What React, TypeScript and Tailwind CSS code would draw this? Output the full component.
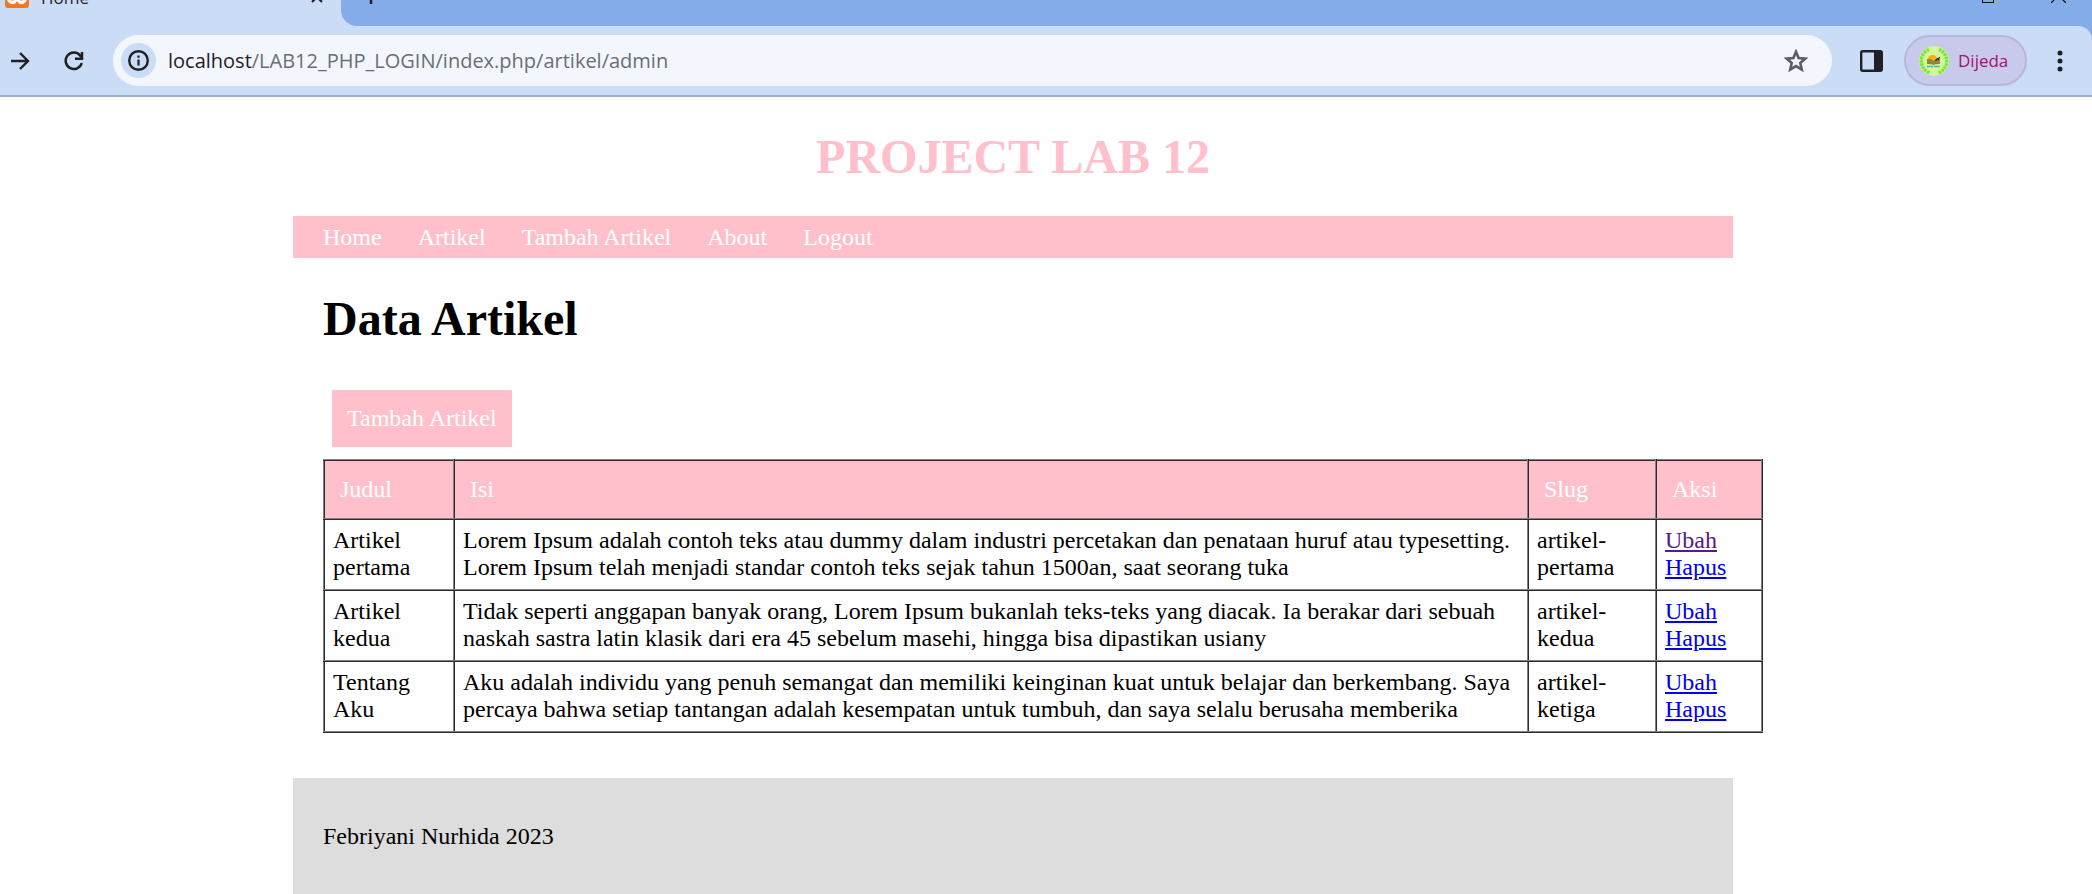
import React from "react";

const navItems = ["Home", "Artikel", "Tambah Artikel", "About", "Logout"];

const rows = [
  {
    judul: "Artikel pertama",
    isi: "Lorem Ipsum adalah contoh teks atau dummy dalam industri percetakan dan penataan huruf atau typesetting. Lorem Ipsum telah menjadi standar contoh teks sejak tahun 1500an, saat seorang tuka",
    slug: "artikel-pertama",
    visited: true,
  },
  {
    judul: "Artikel kedua",
    isi: "Tidak seperti anggapan banyak orang, Lorem Ipsum bukanlah teks-teks yang diacak. Ia berakar dari sebuah naskah sastra latin klasik dari era 45 sebelum masehi, hingga bisa dipastikan usiany",
    slug: "artikel-kedua",
    visited: false,
  },
  {
    judul: "Tentang Aku",
    isi: "Aku adalah individu yang penuh semangat dan memiliki keinginan kuat untuk belajar dan berkembang. Saya percaya bahwa setiap tantangan adalah kesempatan untuk tumbuh, dan saya selalu berusaha memberika",
    slug: "artikel-ketiga",
    visited: false,
  },
];

function TabStrip() {
  return (
    <div className="flex h-[26px] overflow-hidden bg-[#84ace9]">
      <div className="relative flex h-[26px] w-[341px] shrink-0 bg-[#cbdcf6]">
        <svg className="absolute bottom-[18px] left-[5px]" width="24" height="24" viewBox="0 0 24 24">
          <rect width="24" height="24" rx="3" fill="#f37623" />
          <path
            d="M8 9.500a4.500 4.500 0 1 0 0 9c3 0 5-9 8-9a4.500 4.500 0 1 1 0 9c-3 0-5-9-8-9z"
            fill="none"
            stroke="#fff"
            strokeWidth="3.500"
          />
        </svg>
        <span className="absolute bottom-[16px] left-[41px] font-['Open_Sans',sans-serif] text-[17px] leading-6 text-[#1f2023]">
          Home
        </span>
        <button aria-label="Close tab" className="absolute bottom-[23px] left-[311px]">
          <svg width="12" height="12" viewBox="0 0 12 12" className="block">
            <path d="M1 1l10 10M11 1L1 11" stroke="#1f2023" strokeWidth="2.200" />
          </svg>
        </button>
      </div>
      <div className="relative flex-1 bg-[#cbdcf6]">
        <div className="h-[26px] rounded-bl-[16px] bg-[#84ace9]" />
        <button aria-label="New tab" className="absolute bottom-[22px] left-[22px]">
          <svg width="16" height="16" viewBox="0 0 16 16" className="block">
            <path d="M8 0v16M0 8h16" stroke="#1f2023" strokeWidth="2.500" />
          </svg>
        </button>
        <button aria-label="Maximize" className="absolute right-[98px] bottom-[23px]">
          <svg width="12" height="12" viewBox="0 0 12 12" className="block">
            <rect x="0.500" y="0.500" width="11" height="11" fill="none" stroke="#111" />
          </svg>
        </button>
        <button aria-label="Close window" className="absolute right-[26px] bottom-[23px]">
          <svg width="15" height="15" viewBox="0 0 15 15" className="block">
            <path d="M0 0l15 15M15 0L0 15" stroke="#111" strokeWidth="1.300" />
          </svg>
        </button>
      </div>
    </div>
  );
}

function Avatar() {
  return (
    <svg width="30" height="30" viewBox="0 0 30 30" className="shrink-0">
      <circle cx="15" cy="15" r="15" fill="#d3f59b" />
      <path d="M10 3.500A12.500 12.500 0 0 0 11 27" fill="none" stroke="#7be53c" strokeWidth="3.400" strokeDasharray="2.600 0.800" />
      <path d="M20 3.500A12.500 12.500 0 0 1 19 27" fill="none" stroke="#7be53c" strokeWidth="3.400" strokeDasharray="2.600 0.800" />
      <path d="M9 13.500a4.500 4.500 0 0 1 9 0z" fill="#ffad0f" />
      <path d="M8 13q4-1 6.500 1.500q2.500-2.500 6.500-1.500v5q-4-.5-6.500 1q-2.500-1.500-6.500-1z" fill="#93873a" />
      <path d="M16.500 14.500l2-2 .8.800 1.400-2.300" fill="none" stroke="#222" strokeWidth="1.200" />
      <path d="M8 20.500h13" stroke="#38bfb0" strokeWidth="1.400" strokeDasharray="6 0.700" />
    </svg>
  );
}

function Toolbar() {
  return (
    <div className="bg-[#84ace9]">
      <div className="flex h-[71px] items-center rounded-tr-[14px] border-b-2 border-[#a2b1d0] bg-[#cbdcf6] font-['Open_Sans',sans-serif]">
        <button aria-label="Forward" className="ml-[10px]">
          <svg width="20" height="20" viewBox="0 0 20 20" className="block">
            <path d="M1 10h16.500M10 2l8 8-8 8" fill="none" stroke="#1f2023" strokeWidth="2.400" />
          </svg>
        </button>
        <button aria-label="Reload" className="ml-[34px]">
          <svg width="20" height="20" viewBox="0 0 20 20" className="block">
            <path d="M17.800 12A8.200 8.200 0 1 1 16 4.300L18 6.500" fill="none" stroke="#1f2023" strokeWidth="2.500" />
            <path d="M18 1v6.800h-7" fill="none" stroke="#1f2023" strokeWidth="2.500" />
          </svg>
        </button>
        <div className="ml-[29px] flex h-[51px] flex-1 items-center rounded-full bg-[#f3f7fd] pr-[24px] pl-2">
          <button aria-label="Site information" className="flex size-[35px] items-center justify-center rounded-full bg-[#cbdcf6]">
            <svg width="21" height="21" viewBox="0 0 21 21">
              <circle cx="10.500" cy="10.500" r="9.300" fill="none" stroke="#1f2023" strokeWidth="2.400" />
              <path d="M10.500 9.500v6M10.500 5.500v2.200" stroke="#1f2023" strokeWidth="2.200" />
            </svg>
          </button>
          <div className="ml-[12px] flex-1 text-[20px] leading-7 whitespace-nowrap text-[#6a6e73]">
            <span className="text-[#1f2023]">localhost</span>/LAB12_PHP_LOGIN/index.php/artikel/admin
          </div>
          <button aria-label="Bookmark">
            <svg width="24" height="23" viewBox="0 0 24 23" className="block">
              <path
                d="M12 2.800l2.600 6.200 6.800.6-5.100 4.400 1.500 6.600-5.800-3.500-5.800 3.500 1.500-6.600L2.600 9.600l6.800-.6z"
                fill="none"
                stroke="#5c5f63"
                strokeWidth="2.600"
              />
            </svg>
          </button>
        </div>
        <button aria-label="Side panel" className="ml-[28px]">
          <svg width="23" height="22" viewBox="0 0 23 22" className="block">
            <rect x="1.200" y="1.200" width="20.600" height="19.600" rx="1.500" fill="none" stroke="#1f2023" strokeWidth="2.400" />
            <path d="M14 1h8v20h-8z" fill="#1f2023" />
          </svg>
        </button>
        <button className="ml-[21px] flex h-[51px] w-[123px] items-center gap-[9px] rounded-full border-2 border-[#b5b7dc] bg-[#c8caeb] pl-[13px] text-[17px] text-[#a0126e]">
          <Avatar />
          Dijeda
        </button>
        <button aria-label="Menu" className="mr-[29px] ml-[30px]">
          <svg width="6" height="22" viewBox="0 0 6 22" className="block">
            <circle cx="3" cy="3" r="2.500" fill="#1f2023" />
            <circle cx="3" cy="11" r="2.500" fill="#1f2023" />
            <circle cx="3" cy="19" r="2.500" fill="#1f2023" />
          </svg>
        </button>
      </div>
    </div>
  );
}

const cell = "border-2 border-[#808080] [border-style:ridge] pt-[6px] pr-[7px] pb-[8px] pl-2";
const head = "border-2 border-[#808080] [border-style:ridge] px-[15px] text-left font-normal";

export default function App() {
  return (
    <div className="min-h-screen bg-white">
      <TabStrip />
      <Toolbar />
      <div className="pr-[66px] font-['Liberation_Serif',serif] text-2xl leading-[27px] text-black">
        <div className="mx-auto max-w-[1440px]">
          <header className="pt-[32px] pb-[32px]">
            <h1 className="text-center text-5xl leading-[55px] font-bold text-[#ffc0cb]">PROJECT LAB 12</h1>
          </header>
          <nav className="flex h-[42px] items-center gap-9 bg-[#ffc0cb] px-[30px] text-white">
            {navItems.map((item) => (
              <a key={item} href="#">
                {item}
              </a>
            ))}
          </nav>
          <main className="-mr-[30px] pt-[33px] pb-[45px] pl-[30px]">
            <h2 className="text-5xl leading-[55px] font-bold">Data Artikel</h2>
            <a href="#" className="mt-[44px] ml-[9px] inline-block bg-[#ffc0cb] p-[15px] text-white">
              Tambah Artikel
            </a>
            <table className="mt-[12px] w-full table-fixed border-collapse">
              <thead>
                <tr className="h-[59px] bg-[#ffc0cb] text-white">
                  <th className={`w-[130px] ${head}`}>Judul</th>
                  <th className={head}>Isi</th>
                  <th className={`w-[128px] ${head}`}>Slug</th>
                  <th className={`w-[106px] ${head}`}>Aksi</th>
                </tr>
              </thead>
              <tbody>
                {rows.map((row) => (
                  <tr key={row.slug} className="h-[71px]">
                    <td className={cell}>{row.judul}</td>
                    <td className={cell}>{row.isi}</td>
                    <td className={cell}>{row.slug}</td>
                    <td className={cell}>
                      <a href="#" className={row.visited ? "text-[#551a8b] underline" : "text-[#0000ee] underline"}>
                        Ubah
                      </a>
                      <br />
                      <a href="#" className="text-[#0000ee] underline">
                        Hapus
                      </a>
                    </td>
                  </tr>
                ))}
              </tbody>
            </table>
          </main>
          <footer className="bg-[#dddddd] px-[30px] pt-[45px] pb-[44px]">
            <p>Febriyani Nurhida 2023</p>
          </footer>
        </div>
      </div>
    </div>
  );
}
